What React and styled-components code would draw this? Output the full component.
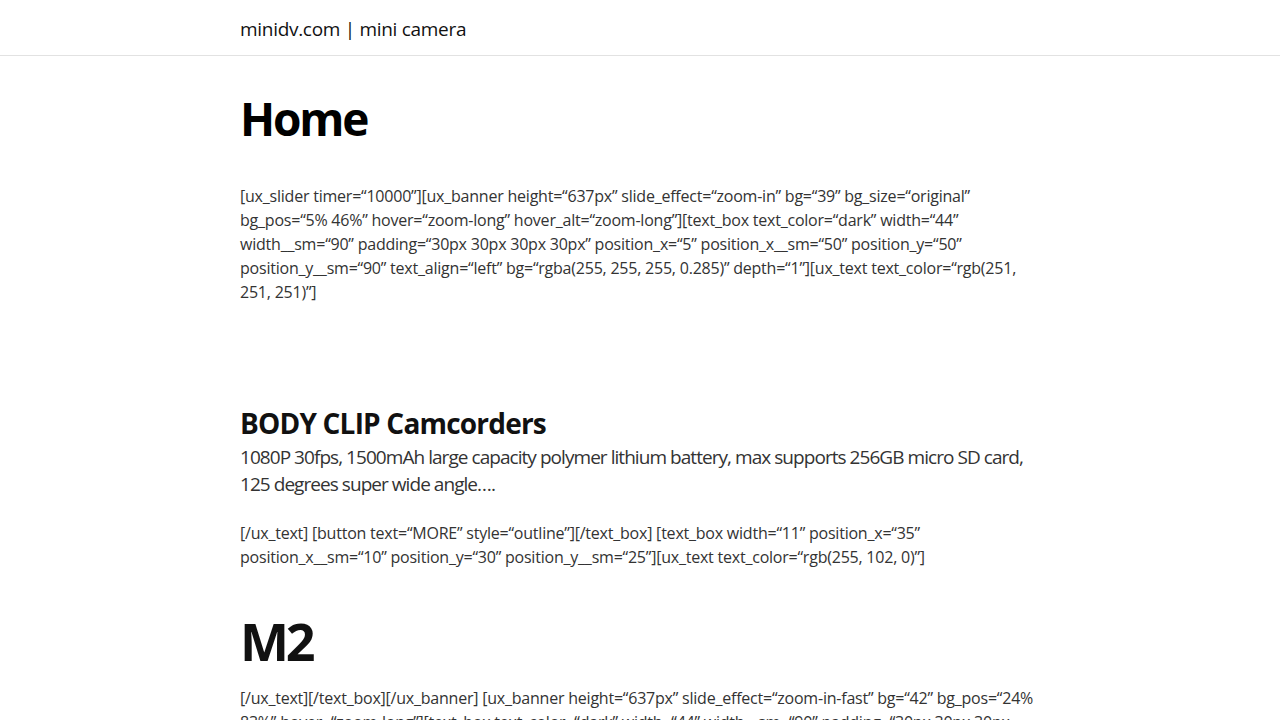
import React from 'react'
import styled, { createGlobalStyle } from 'styled-components'

const GlobalStyle = createGlobalStyle`
  html, body {
    margin: 0;
    padding: 0;
    background: #fff;
    font-family: "Open Sans", "Noto Sans", sans-serif;
    color: #333;
  }
`

const Header = styled.header`
  height: 55px;
  border-bottom: 1px solid #e2e2e2;
  display: flex;
  align-items: center;
`

const Container = styled.div`
  width: 800px;
  margin: 0 auto;
`

const SiteTitle = styled.a`
  font-size: 19px;
  color: #111;
  text-decoration: none;
  letter-spacing: -0.3px;
  padding-top: 2px;
  display: inline-block;
`

const Main = styled.main`
  padding-top: 30px;
`

const PageTitle = styled.h1`
  margin: 0 0 34px;
  font-size: 46px;
  line-height: 64px;
  font-weight: 700;
  color: #000;
  letter-spacing: -2.2px;
`

const Code = styled.p`
  margin: 0 0 ${p => p.gap || 0}px;
  font-size: 16px;
  line-height: 24px;
  color: #333;
  letter-spacing: -0.22px;
  white-space: nowrap;
`

const Heading = styled.h2`
  margin: 0 0 4px;
  font-size: 28px;
  line-height: 34px;
  font-weight: 700;
  color: #111;
  letter-spacing: -0.8px;
`

const Lead = styled.p`
  margin: 0 0 23px;
  font-size: 19px;
  line-height: 27px;
  color: #333;
  letter-spacing: -0.95px;
  white-space: nowrap;
`

const BigTitle = styled.h1`
  margin: 0 0 13px;
  font-size: 52px;
  line-height: 64px;
  font-weight: 700;
  color: #111;
  letter-spacing: -3.2px;
`

const App = () => {
  return (
    <>
      <GlobalStyle />
      <Header>
        <Container>
          <SiteTitle href="#">minidv.com | mini camera</SiteTitle>
        </Container>
      </Header>
      <Main>
        <Container>
          <PageTitle>Home</PageTitle>
          <Code gap={102}>
            [ux_slider timer=“10000”][ux_banner height=“637px” slide_effect=“zoom-in” bg=“39” bg_size=“original”<br />
            bg_pos=“5% 46%” hover=“zoom-long” hover_alt=“zoom-long”][text_box text_color=“dark” width=“44”<br />
            width__sm=“90” padding=“30px 30px 30px 30px” position_x=“5” position_x__sm=“50” position_y=“50”<br />
            position_y__sm=“90” text_align=“left” bg=“rgba(255, 255, 255, 0.285)” depth=“1”][ux_text text_color=“rgb(251,<br />
            251, 251)”]
          </Code>
          <Heading>BODY CLIP Camcorders</Heading>
          <Lead>
            1080P 30fps, 1500mAh large capacity polymer lithium battery, max supports 256GB micro SD card,<br />
            125 degrees super wide angle….
          </Lead>
          <Code gap={40}>
            [/ux_text] [button text=“MORE” style=“outline”][/text_box] [text_box width=“11” position_x=“35”<br />
            position_x__sm=“10” position_y=“30” position_y__sm=“25”][ux_text text_color=“rgb(255, 102, 0)”]
          </Code>
          <BigTitle>M2</BigTitle>
          <Code>
            [/ux_text][/text_box][/ux_banner] [ux_banner height=“637px” slide_effect=“zoom-in-fast” bg=“42” bg_pos=“24%<br />
            83%” hover=“zoom-long”][text_box text_color=“dark” width=“44” width__sm=“90” padding=“30px 30px 30px
          </Code>
        </Container>
      </Main>
    </>
  )
}

export default App
